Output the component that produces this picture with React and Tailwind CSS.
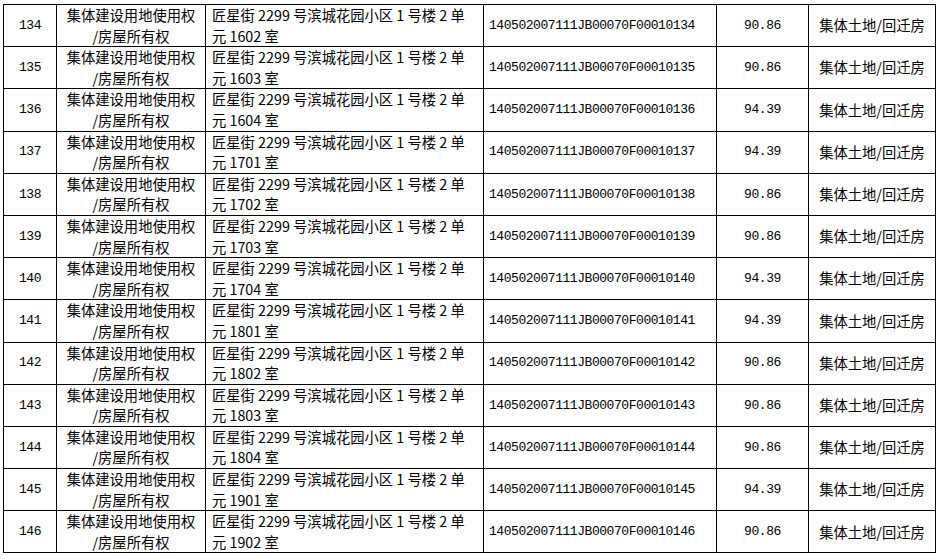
import React from "react";

const ROWS = [
  ["134", "1602", "90.86"],
  ["135", "1603", "90.86"],
  ["136", "1604", "94.39"],
  ["137", "1701", "94.39"],
  ["138", "1702", "90.86"],
  ["139", "1703", "90.86"],
  ["140", "1704", "94.39"],
  ["141", "1801", "94.39"],
  ["142", "1802", "90.86"],
  ["143", "1803", "90.86"],
  ["144", "1804", "90.86"],
  ["145", "1901", "94.39"],
  ["146", "1902", "90.86"],
];

const cjk = "font-['Noto_Sans_CJK_SC',sans-serif] text-[14.3px] leading-[20.6px]";
const mono = "font-['Liberation_Mono',monospace] text-[13px] tracking-[-0.45px]";

const App = () => {
  return (
    <div className="w-[938px] h-[559px] bg-white text-black pl-[3px] pt-[4px]">
      <table className="table-fixed border-collapse w-[932px]">
        <colgroup>
          <col className="w-[53px]" />
          <col className="w-[149px]" />
          <col className="w-[278px]" />
          <col className="w-[233px]" />
          <col className="w-[92px]" />
          <col className="w-[127px]" />
        </colgroup>
        <tbody>
          {ROWS.map(([no, room, area]) => (
            <tr key={no}>
              <td className={`border border-black text-center align-middle ${mono}`}>
                {no}
              </td>
              <td className={`border border-black text-center align-middle ${cjk}`}>
                <div>集体建设用地使用权</div>
                <div>/房屋所有权</div>
              </td>
              <td className={`border border-black text-left align-middle pl-[6px] ${cjk}`}>
                <div className="whitespace-nowrap">匠星街 2299 号滨城花园小区 1 号楼 2 单</div>
                <div className="whitespace-nowrap">元 {room} 室</div>
              </td>
              <td className={`border border-black text-left align-middle pl-[5px] ${mono}`}>
                140502007111JB00070F00010{no}
              </td>
              <td className={`border border-black text-center align-middle ${mono}`}>
                {area}
              </td>
              <td className={`border border-black text-center align-middle whitespace-nowrap ${cjk}`}>
                集体土地/回迁房
              </td>
            </tr>
          ))}
        </tbody>
      </table>
    </div>
  );
};

export default App;
